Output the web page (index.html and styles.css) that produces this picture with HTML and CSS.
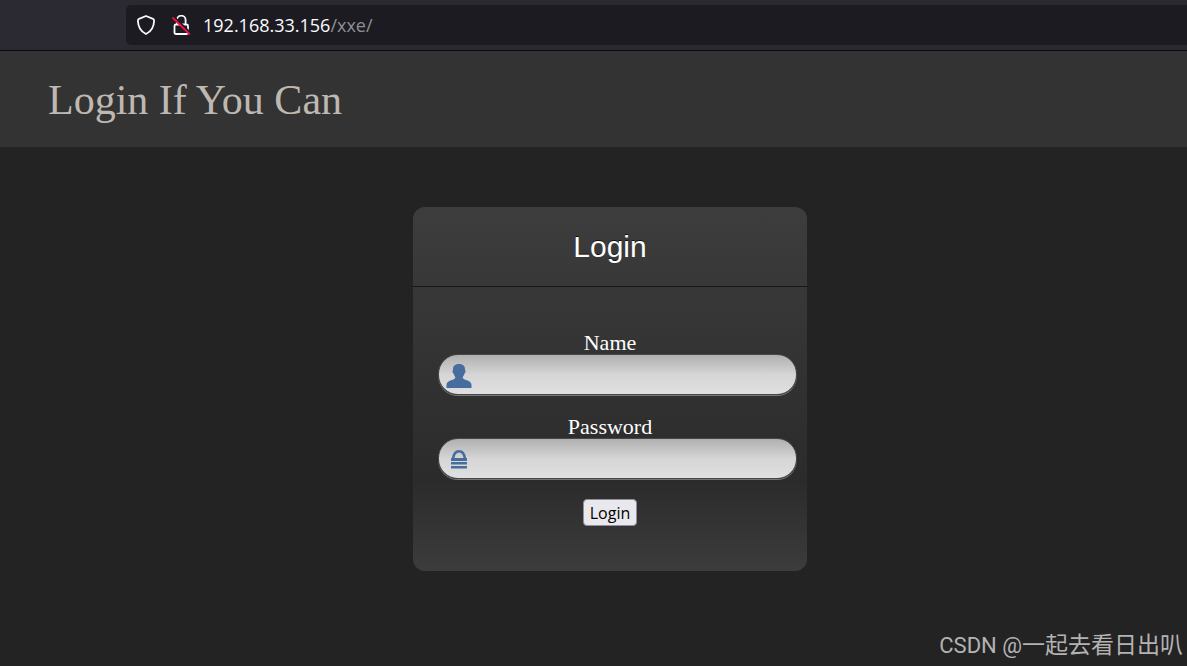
FILE: index.html
```html
<!DOCTYPE html>
<html lang="en">
<head>
<meta charset="utf-8">
<title>Login If You Can</title>
<link rel="stylesheet" href="styles.css">
</head>
<body>
<div class="toolbar">
  <div class="address">
    <svg class="icon" viewBox="0 0 20 20" width="20" height="20" aria-hidden="true">
      <path d="M10 1 L17 3.8 Q18.2 4.4 18.1 5.8 C17.9 12 15.4 16.6 10 19 C4.6 16.6 2.1 12 1.9 5.8 Q1.8 4.4 3 3.8 Z" fill="none" stroke="#fbfbfe" stroke-width="1.8" stroke-linejoin="round"/>
    </svg>
    <svg class="icon" viewBox="0 0 20 20" width="20" height="20" aria-hidden="true">
      <path d="M6 9 V5 A4.300 4.300 0 0 1 14.600 5 V9 M5 9.500 H15.500 Q17 9.500 17 11 V17.500 Q17 19 15.500 19 H5 Q3.500 19 3.500 17.500 V11 Q3.500 9.500 5 9.500" fill="none" stroke="#fbfbfe" stroke-width="1.800"/>
      <path d="M3 2 L19.500 18" stroke="#1c1b22" stroke-width="2.200"/>
      <path d="M1.500 2.500 L18.800 19.500" stroke="#f0103f" stroke-width="1.900"/>
    </svg>
    <span class="url">192.168.33.156<span class="path">/xxe/</span></span>
  </div>
</div>
<header class="banner">
  <h1 class="title">Login If You Can</h1>
</header>
<main class="content">
  <form class="card">
    <h2 class="card-title">Login</h2>
    <div class="fields">
      <label class="label" for="name">Name</label>
      <div class="field">
        <svg class="field-icon" viewBox="0 0 26 26" width="26" height="26" aria-hidden="true">
          <path d="M13 1 C17.500 1 19.300 3.500 19 7 C20 7.500 19.500 10 18.500 10.500 C18 12.500 17 13.500 16.800 14 V15 C18 17.500 25.500 17 25.500 22 V25 H.5 V22 C.5 17 8 17.500 9.200 15 V14 C9 13.500 8 12.500 7.500 10.500 C6.500 10 6 7.500 7 7 C6.700 3.500 8.500 1 13 1 Z" fill="#476d9f"/>
        </svg>
        <input class="input" id="name" type="text">
      </div>
      <label class="label" for="password">Password</label>
      <div class="field">
        <svg class="field-icon" viewBox="0 0 26 26" width="26" height="26" aria-hidden="true">
          <path d="M7 12 C7.500 7.500 9.500 4.300 13 4.300 C16.500 4.300 18.500 7.500 19 12" fill="none" stroke="#476d9f" stroke-width="2.600"/>
          <path d="M5 11 H21 V14 H5 Z M5 15 H21 V17.500 H5 Z M5 19 H21 V21.500 H5 Z" fill="#476d9f"/>
        </svg>
        <input class="input" id="password" type="password">
      </div>
      <button class="submit" type="button">Login</button>
    </div>
  </form>
</main>
<footer class="credit"><span class="credit-site">CSDN @</span>一起去看日出叭</footer>
</body>
</html>
```

FILE: styles.css
```css
* {
  box-sizing: border-box;
}

body {
  margin: 0;
  min-height: 100vh;
  display: flex;
  flex-direction: column;
  background: #232323;
  color: #fff;
  font-family: "Liberation Serif", serif;
}

.toolbar {
  padding: 5px 0 5px 126px;
  background: #2b2a33;
  border-bottom: 1px solid #0c0c0d;
}

.address {
  display: flex;
  align-items: center;
  gap: 15px;
  height: 40px;
  padding-left: 10px;
  border-radius: 5px 0 0 5px;
  background: #1c1b22;
}

.icon {
  display: block;
}

.url {
  margin-left: -3px;
  font: 18px/24px "Open Sans", "Noto Sans", sans-serif;
  color: #fbfbfe;
}

.path {
  color: #8f8f94;
}

.banner {
  padding: 25px 48px 23px;
  background: #333;
}

.title {
  margin: 0;
  font-size: 42px;
  line-height: 48px;
  font-weight: 400;
  color: #bfb8b2;
}

.content {
  flex: 1;
  display: flex;
  justify-content: center;
  align-items: flex-start;
  padding: 60px 0 60px 33px;
}

.card {
  width: 394px;
  border-radius: 12px;
  background: linear-gradient(#3d3d3d, #2b2b2b 75%, #3c3c3c);
}

.card-title {
  margin: 0;
  padding: 20px 0 19px;
  border-bottom: 1px solid #171717;
  font: 30px/40px "Liberation Sans", sans-serif;
  text-align: center;
  text-shadow: 0 -1px 0 #111;
}

.fields {
  display: flex;
  flex-direction: column;
  padding: 44px 10px 45px 25px;
}

.label {
  margin-right: 15px;
  font-size: 22px;
  line-height: 23px;
  text-align: center;
}

.field {
  position: relative;
  margin-bottom: 20px;
}

.field-icon {
  position: absolute;
  left: 8px;
  top: 9px;
}

.input {
  display: block;
  width: 100%;
  height: 41px;
  padding: 0 16px 0 44px;
  border: 1px solid #484848;
  border-radius: 20px;
  background: linear-gradient(#b0b0b0, #d5d5d5 50%, #e0e0e0);
  box-shadow: 0 1px 0 #777;
  font: 18px "Liberation Sans", sans-serif;
  color: #222;
}

.submit {
  align-self: center;
  height: 27px;
  margin-right: 15px;
  padding: 0 6px;
  border: 1px solid #8f8f9d;
  border-radius: 4px;
  background: #e9e9ed;
  color: #000;
  font: 16px "Open Sans", "Noto Sans", sans-serif;
}

.credit {
  position: absolute;
  right: 4px;
  bottom: 4px;
  font: 23px/32px "Noto Sans CJK SC", sans-serif;
  color: #b3b3b3;
}

.credit-site {
  font-family: Roboto, sans-serif;
  font-size: 22px;
}
```
